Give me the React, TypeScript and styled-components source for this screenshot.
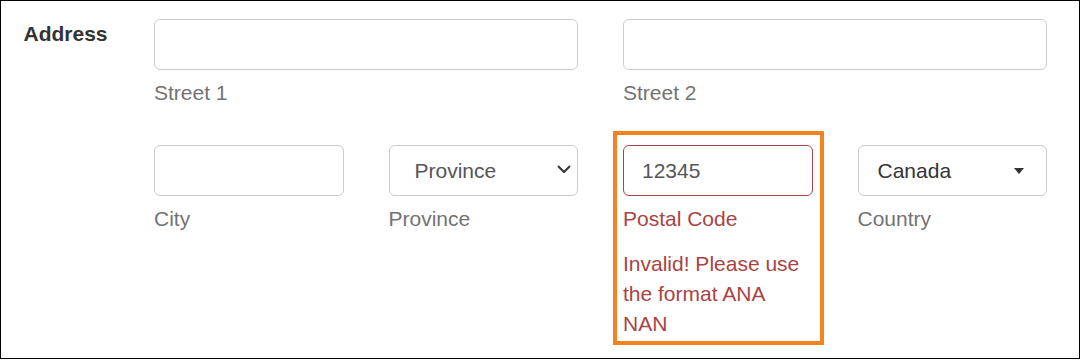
import React from "react";
import styled, { createGlobalStyle } from "styled-components";

const GlobalStyle = createGlobalStyle`
  html, body {
    margin: 0;
    padding: 0;
    background: #fff;
  }
  body {
    font-family: "Liberation Sans", Arial, Helvetica, sans-serif;
  }
  *, *::before, *::after { box-sizing: border-box; }
`;

const Frame = styled.form`
  width: 1080px;
  height: 359px;
  border: 1px solid #000;
  padding: 18px 9.5px 0 0;
  display: grid;
  grid-template-columns: 130.5px repeat(4, 1fr);
  grid-auto-rows: min-content;
  row-gap: 22.5px;
  align-content: start;
  font-size: 21px;
  line-height: 30px;
  color: #333;
`;

const GroupLabel = styled.label`
  grid-column: 1;
  padding-left: 22.5px;
  font-weight: 700;
  color: #333;
`;

const Cell = styled.div<{ $col: number; $span?: number; $highlight?: boolean }>`
  grid-column: ${(p) => p.$col} / span ${(p) => p.$span ?? 1};
  padding: 0 22.5px;
  position: relative;
  ${(p) =>
    p.$highlight &&
    `
    &::after {
      content: "";
      box-sizing: border-box;
      position: absolute;
      left: 12.5px;
      right: 11.5px;
      top: -14px;
      height: 214px;
      border: 4px solid #f5821f;
      pointer-events: none;
    }
  `}
`;

const TextInput = styled.input<{ $error?: boolean }>`
  display: block;
  width: 100%;
  height: 51px;
  padding: 0 18px;
  font-family: inherit;
  font-size: 21px;
  color: #555;
  background: #fff;
  border: 1px solid ${(p) => (p.$error ? "#a94442" : "#ccc")};
  border-radius: 6px;
  outline: none;
`;

const SelectWrap = styled.div`
  position: relative;
`;

const NativeSelect = styled.select`
  display: block;
  width: 100%;
  height: 51px;
  padding: 0 30px 0 25px;
  font-family: inherit;
  font-size: 21px;
  color: #555;
  background: #fff;
  border: 1px solid #ccc;
  border-radius: 6px;
  appearance: none;
  -webkit-appearance: none;
  outline: none;
`;

const Chevron = styled.svg`
  position: absolute;
  right: 7px;
  top: 20px;
  width: 14px;
  height: 9px;
  pointer-events: none;
`;

const DropButton = styled.button`
  display: flex;
  align-items: center;
  justify-content: space-between;
  width: 100%;
  height: 51px;
  padding: 0 22px 0 19px;
  font-family: inherit;
  font-size: 21px;
  color: #333;
  background: #fff;
  border: 1px solid #ccc;
  border-radius: 6px;
  cursor: pointer;
`;

const Caret = styled.span`
  width: 0;
  height: 0;
  border-top: 6px solid #333;
  border-left: 5px solid transparent;
  border-right: 5px solid transparent;
  margin-top: 1px;
`;

const Help = styled.span<{ $error?: boolean }>`
  display: block;
  margin: 7.5px 0 15px;
  color: ${(p) => (p.$error ? "#a94442" : "#737373")};
`;

const ErrorText = styled.span`
  display: block;
  margin: 0;
  color: #a94442;
`;

export default function App() {
  return (
    <>
      <GlobalStyle />
      <Frame onSubmit={(e) => e.preventDefault()}>
        <GroupLabel>Address</GroupLabel>
        <Cell $col={2} $span={2}>
          <TextInput type="text" />
          <Help>Street 1</Help>
        </Cell>
        <Cell $col={4} $span={2}>
          <TextInput type="text" />
          <Help>Street 2</Help>
        </Cell>

        <Cell $col={2}>
          <TextInput type="text" />
          <Help>City</Help>
        </Cell>
        <Cell $col={3}>
          <SelectWrap>
            <NativeSelect defaultValue="">
              <option value="">Province</option>
              <option value="ON">Ontario</option>
              <option value="QC">Quebec</option>
            </NativeSelect>
            <Chevron viewBox="0 0 14 9">
              <path
                d="M1.5 1.5 L7 7 L12.5 1.5"
                fill="none"
                stroke="#333"
                strokeWidth="2"
                strokeLinecap="round"
                strokeLinejoin="round"
              />
            </Chevron>
          </SelectWrap>
          <Help>Province</Help>
        </Cell>
        <Cell $col={4} $highlight>
          <TextInput type="text" defaultValue="12345" $error />
          <Help $error>Postal Code</Help>
          <ErrorText>Invalid! Please use the format ANA NAN</ErrorText>
        </Cell>
        <Cell $col={5}>
          <DropButton type="button">
            <span>Canada</span>
            <Caret />
          </DropButton>
          <Help>Country</Help>
        </Cell>
      </Frame>
    </>
  );
}
